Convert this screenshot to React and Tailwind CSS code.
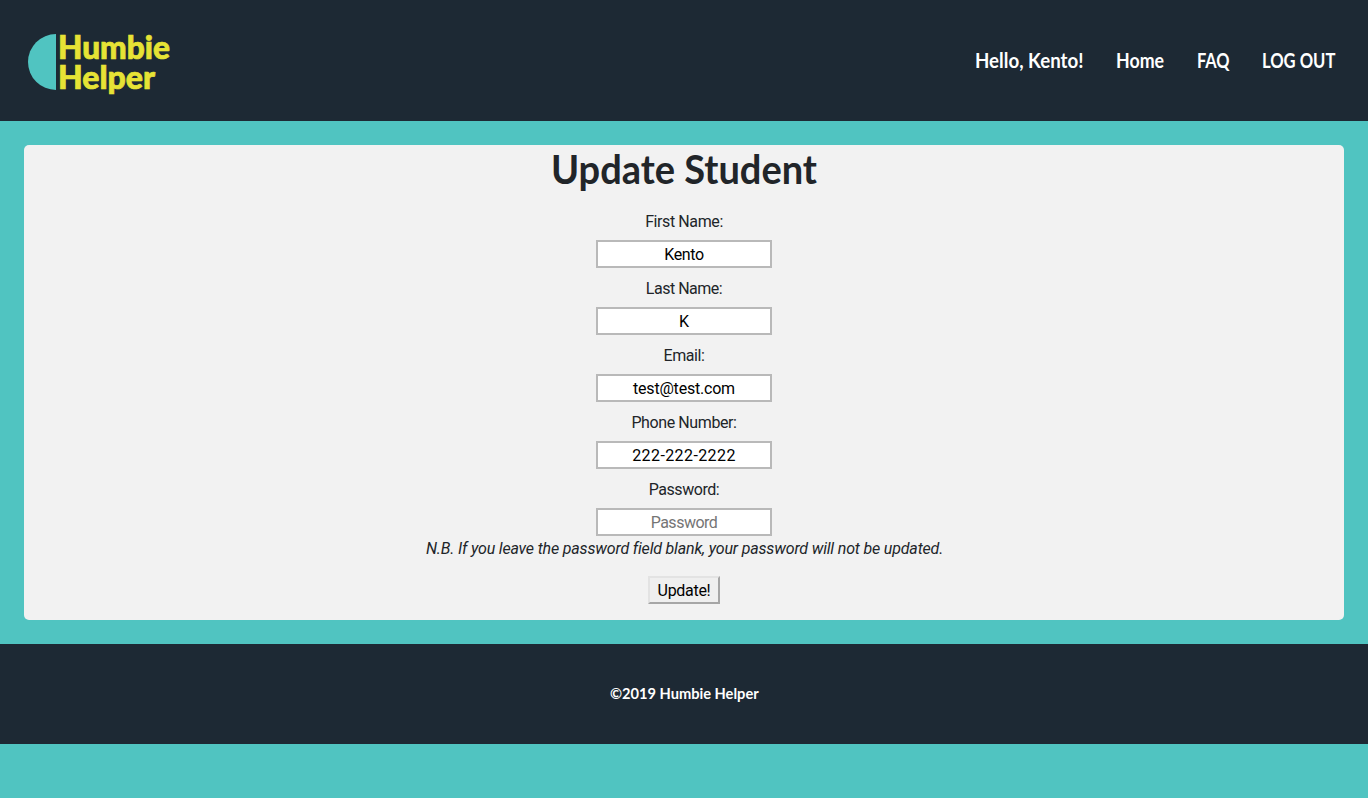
const fields = [
  { label: 'First Name:', value: 'Kento', labelClass: 'tracking-[-0.4px]', valueClass: 'text-black tracking-[-0.35px]' },
  { label: 'Last Name:', value: 'K', labelClass: 'tracking-[-0.5px]', valueClass: 'text-black' },
  { label: 'Email:', value: 'test@test.com', labelClass: 'tracking-[-0.4px]', valueClass: 'text-black tracking-[-0.2px]' },
  { label: 'Phone Number:', value: '222-222-2222', labelClass: 'tracking-[-0.4px]', valueClass: 'text-black tracking-[0.4px]' },
  { label: 'Password:', value: 'Password', labelClass: 'tracking-[-0.45px]', valueClass: 'text-[#757575] tracking-[-0.5px]' },
];

function Logo() {
  return (
    <svg width="150" height="77" viewBox="0 0 150 77" role="img" aria-label="Humbie Helper">
      <path d="M28 12 A28 28 0 0 0 28 68 Z" fill="#50c4c1" />
      <g fill="#e6e335" stroke="#e6e335" strokeWidth="0.7" fontFamily="Lato, sans-serif" fontWeight="900" fontSize="32">
        <text x="30" y="37" textLength="112" lengthAdjust="spacingAndGlyphs">Humbie</text>
        <text x="30" y="67" textLength="97" lengthAdjust="spacingAndGlyphs">Helper</text>
      </g>
    </svg>
  );
}

export default function App() {
  return (
    <div className="min-h-screen bg-[#50c4c1] font-[Roboto,sans-serif] text-base text-[#212529]">
      <header className="flex h-[121px] items-center justify-between bg-[#1d2934] pr-8 pl-7">
        <Logo />
        <nav className="flex gap-8 pb-px font-[Lato,sans-serif] text-[20px] leading-[30px] font-bold whitespace-nowrap text-white">
          <a className="w-[109px]"><span className="inline-block origin-left scale-x-[0.935]">Hello, Kento!</span></a>
          <a className="w-[49px]"><span className="inline-block origin-left scale-x-[0.89]">Home</span></a>
          <a className="w-[33px]"><span className="inline-block origin-left scale-x-[0.82]">FAQ</span></a>
          <a className="w-[74px]"><span className="inline-block origin-left scale-x-[0.83]">LOG OUT</span></a>
        </nav>
      </header>
      <main className="p-6">
        <section className="flex h-[475px] flex-col items-center rounded-[5px] bg-[#f2f2f2]">
          <h1 className="h-[64px] scale-x-[0.95] font-[Lato,sans-serif] text-[40px] leading-[48px] font-bold">Update Student</h1>
          {fields.map((f) => (
            <div key={f.label} className="flex h-[67px] flex-col items-center">
              <label className={`h-[31px] leading-[26px] ${f.labelClass}`}>{f.label}</label>
              <div className={`h-[28px] w-[176px] border-2 border-[#b9b9b9] bg-white text-center leading-[25px] ${f.valueClass}`}>
                {f.value}
              </div>
            </div>
          ))}
          <p className="-mt-[7px] h-[39px] pl-px leading-6 tracking-[-0.17px] whitespace-nowrap italic">
            N.B. If you leave the password field blank, your password will not be updated.
          </p>
          <button className="h-[28px] w-[72px] border-2 border-t-[#e3e3e3] border-r-[#a6a6a6] border-b-[#a6a6a6] border-l-[#e3e3e3] bg-[#efefef] leading-[25px] tracking-[-0.3px] text-black">
            Update!
          </button>
        </section>
      </main>
      <footer className="flex h-[100px] items-center justify-center bg-[#1d2934] pb-0.5 font-[Lato,sans-serif] text-base font-bold text-white">
        <span className="scale-x-[0.915]">©2019 Humbie Helper</span>
      </footer>
    </div>
  );
}
